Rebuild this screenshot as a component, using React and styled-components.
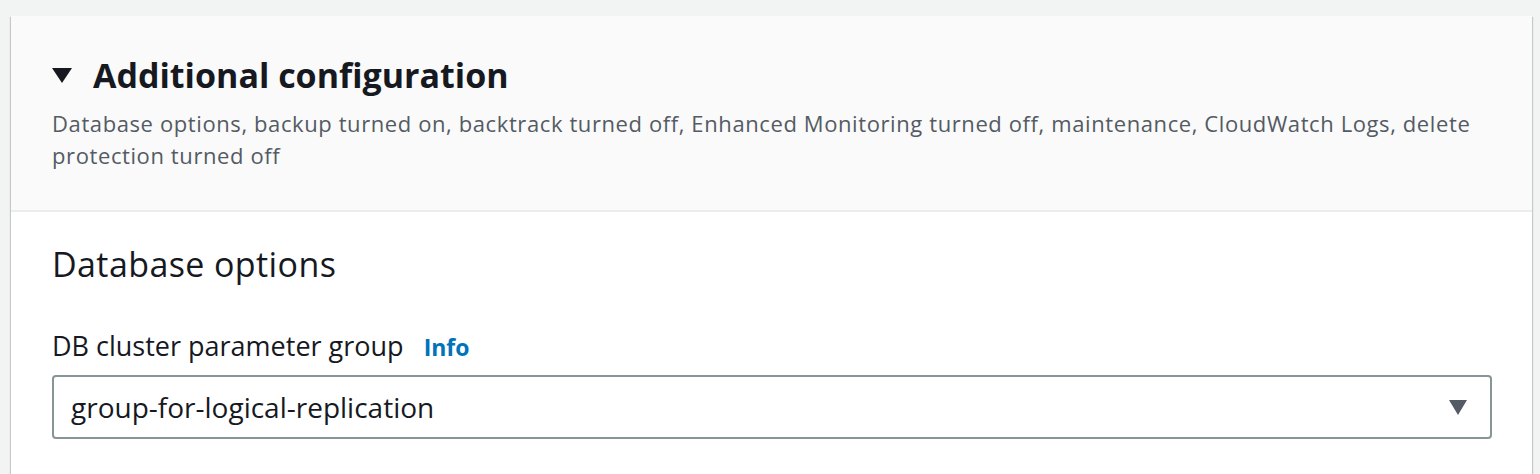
import React from "react";
import styled, { createGlobalStyle } from "styled-components";

const GlobalStyle = createGlobalStyle`
  html, body {
    margin: 0;
    background: #f2f3f3;
  }
  body {
    font-family: "Open Sans", "Noto Sans", sans-serif;
    color: #16191f;
  }
`;

const Page = styled.div`
  padding: 16px 8px 0 11px;
  height: 474px;
  box-sizing: border-box;
  overflow: hidden;
`;

const Card = styled.section`
  background: #ffffff;
  min-height: 480px;
  box-shadow: 0 1px 1px 0 rgba(0, 28, 36, 0.3), 1px 1px 1px 0 rgba(0, 28, 36, 0.15),
    -1px 1px 1px 0 rgba(0, 28, 36, 0.15);
`;

const Header = styled.div`
  background: #fafafa;
  border-bottom: 2px solid #eaeded;
  padding: 37px 40px 39px 41px;
`;

const TitleRow = styled.div`
  display: flex;
  align-items: center;
  gap: 21px;
`;

const Caret = styled.svg`
  width: ${(p) => p.$w}px;
  height: ${(p) => p.$h}px;
  flex: none;
  fill: ${(p) => p.$color};
`;

const Title = styled.h2`
  margin: 0;
  font-size: 34px;
  line-height: 44px;
  font-weight: 700;
  color: #16191f;
`;

const Description = styled.p`
  margin: 10px 0 0;
  font-size: 22px;
  line-height: 32px;
  letter-spacing: 0.6px;
  color: #545b64;
`;

const Body = styled.div`
  padding: 30px 40px 40px 41px;
`;

const SectionTitle = styled.h3`
  margin: 0;
  font-size: 34px;
  line-height: 44px;
  font-weight: 400;
  letter-spacing: 0.4px;
  color: #16191f;
`;

const Field = styled.div`
  margin-top: 42px;
`;

const Label = styled.label`
  display: flex;
  align-items: baseline;
  gap: 20px;
  font-size: 27px;
  line-height: 36px;
  color: #16191f;
`;

const InfoLink = styled.a`
  font-weight: 700;
  font-size: 23px;
  color: #0073bb;
  text-decoration: none;
`;

const Select = styled.div`
  margin-top: 10px;
  height: 64px;
  box-sizing: border-box;
  border: 2px solid #879596;
  border-radius: 4px;
  background: #ffffff;
  display: flex;
  align-items: center;
  justify-content: space-between;
  padding: 0 23px 0 17px;
  font-size: 28px;
  color: #16191f;
`;

export default function App() {
  return (
    <>
      <GlobalStyle />
      <Page>
        <Card>
          <Header>
            <TitleRow>
              <Caret $w={20} $h={15} $color="#16191f" viewBox="0 0 20 15">
                <path d="M0 0h20L10 15z" />
              </Caret>
              <Title>Additional configuration</Title>
            </TitleRow>
            <Description>
              Database options, backup turned on, backtrack turned off, Enhanced Monitoring turned
              off, maintenance, CloudWatch Logs, delete protection turned off
            </Description>
          </Header>
          <Body>
            <SectionTitle>Database options</SectionTitle>
            <Field>
              <Label>
                DB cluster parameter group
                <InfoLink href="#">Info</InfoLink>
              </Label>
              <Select>
                <span>group-for-logical-replication</span>
                <Caret $w={18} $h={15} $color="#545b64" viewBox="0 0 18 15">
                  <path d="M0 0h18L9 15z" />
                </Caret>
              </Select>
            </Field>
          </Body>
        </Card>
      </Page>
    </>
  );
}
